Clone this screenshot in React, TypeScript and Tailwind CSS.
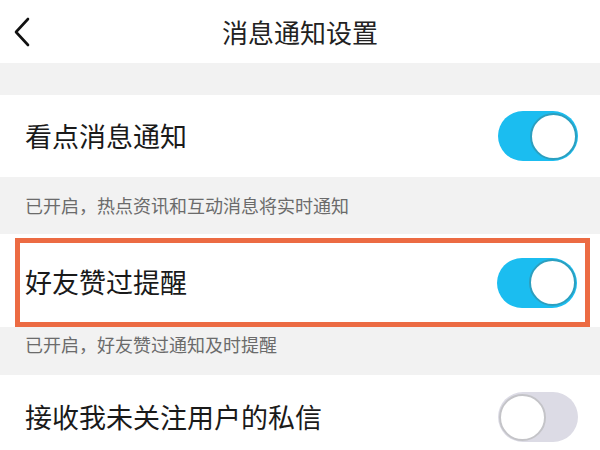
import React from 'react';

function Toggle({ on }: { on: boolean }) {
  return (
    <div
      className={`flex h-[50px] w-[80px] items-center rounded-full px-[1px] ${
        on ? 'justify-end bg-[#1bbdf0]' : 'justify-start bg-[#dcdbe5]'
      }`}
    >
      <div
        className={`h-[47px] w-[47px] rounded-full bg-white ${
          on ? 'border-2 border-[#2c9fbf]' : 'border-2 border-[#c4c4c8]'
        }`}
      />
    </div>
  );
}

export default function App() {
  const font = { fontFamily: '"Noto Sans CJK SC", "Noto Sans", sans-serif' };

  return (
    <div className="h-[450px] w-[600px] overflow-hidden bg-white" style={font}>
      {/* Header */}
      <div className="grid h-[63px] grid-cols-[60px_1fr_60px] items-center">
        <div className="pl-[12px]">
          <svg width="20" height="32" viewBox="0 0 20 32">
            <polyline
              points="16,3 4,16 16,29"
              fill="none"
              stroke="#111"
              strokeWidth="2.6"
              strokeLinecap="round"
              strokeLinejoin="round"
            />
          </svg>
        </div>
        <div className="text-center text-[26px] leading-none text-[#222]">消息通知设置</div>
        <div />
      </div>

      <div className="h-[32px] bg-[#f2f2f2]" />

      {/* Row 1 */}
      <div className="flex h-[82px] items-center justify-between pl-[25px] pr-[22px]">
        <span className="text-[27px] text-[#1a1a1a]">看点消息通知</span>
        <Toggle on />
      </div>
      <div className="flex h-[57px] items-center bg-[#f2f2f2] px-[25px]">
        <span className="text-[18px] text-[#6b6b6b]">已开启，热点资讯和互动消息将实时通知</span>
      </div>

      {/* Row 2 (highlighted) */}
      <div className="bg-white pt-[4px]">
        <div className="ml-[15px] mr-[10px] flex h-[89px] items-center justify-between border-[5px] border-[#ec6b43] pl-[5px] pr-[8px]">
          <span className="text-[27px] text-[#1a1a1a]">好友赞过提醒</span>
          <Toggle on />
        </div>
      </div>
      <div className="h-[48px] bg-[#f2f2f2] px-[25px] pt-[4px]">
        <span className="text-[18px] text-[#6b6b6b]">已开启，好友赞过通知及时提醒</span>
      </div>

      {/* Row 3 */}
      <div className="flex h-[84px] items-center justify-between pl-[25px] pr-[22px]">
        <span className="text-[27px] text-[#1a1a1a]">接收我未关注用户的私信</span>
        <Toggle on={false} />
      </div>
    </div>
  );
}
